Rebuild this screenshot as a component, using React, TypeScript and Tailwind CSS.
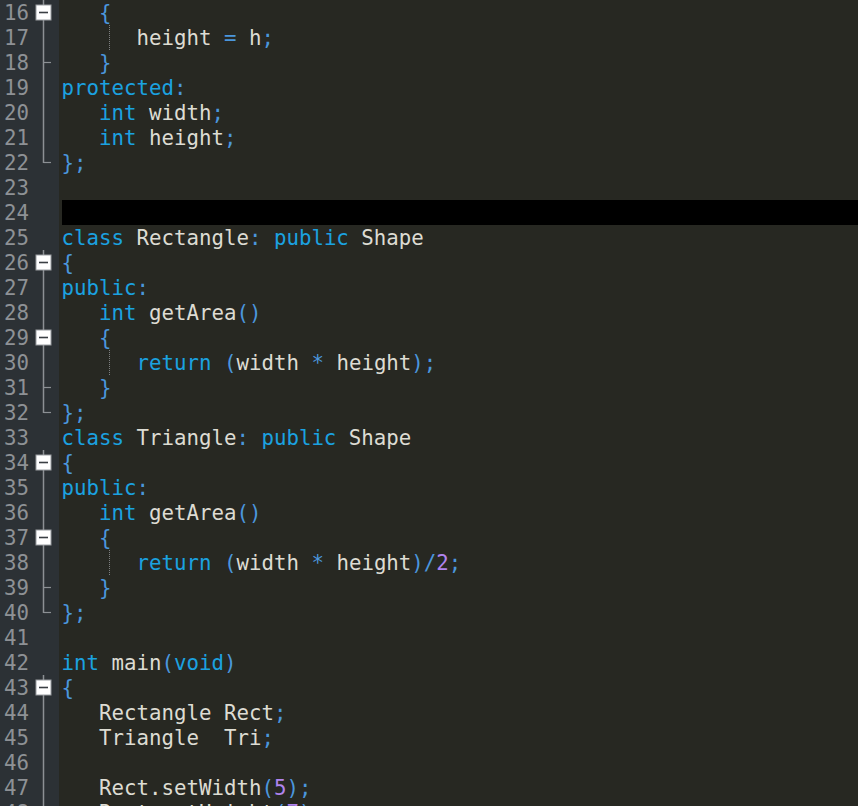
type Kind = "k" | "t" | "o" | "n";
type Tok = [string, Kind];
type Fold = "none" | "box" | "line" | "mid" | "end";

const code: { n: number; toks: Tok[]; fold: Fold; guide?: boolean; active?: boolean }[] = [
  { n: 16, fold: "box", toks: [["   ", "t"], ["{", "o"]] },
  { n: 17, fold: "line", guide: true, toks: [["      height ", "t"], ["=", "o"], [" h", "t"], [";", "o"]] },
  { n: 18, fold: "mid", toks: [["   ", "t"], ["}", "o"]] },
  { n: 19, fold: "line", toks: [["protected", "k"], [":", "o"]] },
  { n: 20, fold: "line", toks: [["   ", "t"], ["int", "k"], [" width", "t"], [";", "o"]] },
  { n: 21, fold: "line", toks: [["   ", "t"], ["int", "k"], [" height", "t"], [";", "o"]] },
  { n: 22, fold: "end", toks: [["};", "o"]] },
  { n: 23, fold: "none", toks: [] },
  { n: 24, fold: "none", toks: [], active: true },
  { n: 25, fold: "none", toks: [["class", "k"], [" Rectangle", "t"], [":", "o"], [" ", "t"], ["public", "k"], [" Shape", "t"]] },
  { n: 26, fold: "box", toks: [["{", "o"]] },
  { n: 27, fold: "line", toks: [["public", "k"], [":", "o"]] },
  { n: 28, fold: "line", toks: [["   ", "t"], ["int", "k"], [" getArea", "t"], ["()", "o"]] },
  { n: 29, fold: "box", toks: [["   ", "t"], ["{", "o"]] },
  { n: 30, fold: "line", guide: true, toks: [["      ", "t"], ["return", "k"], [" ", "t"], ["(", "o"], ["width ", "t"], ["*", "o"], [" height", "t"], [");", "o"]] },
  { n: 31, fold: "mid", toks: [["   ", "t"], ["}", "o"]] },
  { n: 32, fold: "end", toks: [["};", "o"]] },
  { n: 33, fold: "none", toks: [["class", "k"], [" Triangle", "t"], [":", "o"], [" ", "t"], ["public", "k"], [" Shape", "t"]] },
  { n: 34, fold: "box", toks: [["{", "o"]] },
  { n: 35, fold: "line", toks: [["public", "k"], [":", "o"]] },
  { n: 36, fold: "line", toks: [["   ", "t"], ["int", "k"], [" getArea", "t"], ["()", "o"]] },
  { n: 37, fold: "box", toks: [["   ", "t"], ["{", "o"]] },
  { n: 38, fold: "line", guide: true, toks: [["      ", "t"], ["return", "k"], [" ", "t"], ["(", "o"], ["width ", "t"], ["*", "o"], [" height", "t"], [")/", "o"], ["2", "n"], [";", "o"]] },
  { n: 39, fold: "mid", toks: [["   ", "t"], ["}", "o"]] },
  { n: 40, fold: "end", toks: [["};", "o"]] },
  { n: 41, fold: "none", toks: [] },
  { n: 42, fold: "none", toks: [["int", "k"], [" main", "t"], ["(", "o"], ["void", "k"], [")", "o"]] },
  { n: 43, fold: "box", toks: [["{", "o"]] },
  { n: 44, fold: "line", toks: [["   Rectangle Rect", "t"], [";", "o"]] },
  { n: 45, fold: "line", toks: [["   Triangle  Tri", "t"], [";", "o"]] },
  { n: 46, fold: "line", toks: [] },
  { n: 47, fold: "line", toks: [["   Rect.setWidth", "t"], ["(", "o"], ["5", "n"], [");", "o"]] },
  { n: 48, fold: "line", toks: [["   Rect.setHeight", "t"], ["(", "o"], ["7", "n"], [");", "o"]] },
];

const tokClass: Record<Kind, string> = {
  k: "text-[#1ba2e0]",
  t: "text-[#dddcd3]",
  o: "text-[#4b96dc]",
  n: "text-[#b084ee]",
};

function FoldMark({ fold }: { fold: Fold }) {
  const stroke = "#8c9094";
  return (
    <svg width="25" height="25" viewBox="0 0 25 25">
      {fold === "line" && <line x1="9.5" y1="0" x2="9.5" y2="25" stroke={stroke} strokeWidth="1.5" />}
      {fold === "mid" && (
        <>
          <line x1="9.5" y1="0" x2="9.5" y2="25" stroke={stroke} strokeWidth="1.5" />
          <line x1="9.5" y1="12.5" x2="17" y2="12.5" stroke={stroke} strokeWidth="1.2" />
        </>
      )}
      {fold === "end" && (
        <>
          <line x1="9.5" y1="0" x2="9.5" y2="13" stroke={stroke} strokeWidth="1.5" />
          <line x1="9.5" y1="12.5" x2="17" y2="12.5" stroke={stroke} strokeWidth="1.2" />
        </>
      )}
      {fold === "box" && (
        <>
          <line x1="9.5" y1="0" x2="9.5" y2="25" stroke={stroke} strokeWidth="1.5" />
          <rect x="2" y="5" width="15" height="15" fill="#ffffff" stroke="#9a9ea2" strokeWidth="1" />
          <line x1="5" y1="12.5" x2="14" y2="12.5" stroke="#3a3f44" strokeWidth="1.6" />
        </>
      )}
    </svg>
  );
}

export default function App() {
  return (
    <div className="w-[858px] h-[806px] overflow-hidden bg-[#272822] font-['DejaVu_Sans_Mono',monospace] text-[20.75px] leading-[25px]">
      {code.map((line, i) => (
        <div key={line.n} className="flex h-[25px]">
          <div className="w-[34px] shrink-0 bg-[#2c3135] pr-[5px] pt-[1px] text-right text-[#8e9195]">{line.n}</div>
          <div className="w-[25px] shrink-0 bg-[#2c3135]">
            <FoldMark fold={line.fold} />
          </div>
          <div className="w-[2.5px] shrink-0" />
          <div className={`relative flex-1 whitespace-pre pt-[1px] ${line.active ? "bg-black" : ""}`}>
            {line.guide && (
              <span className="absolute left-[47px] top-0 h-[25px] border-l border-dotted border-[#7d7f80]" />
            )}
            {line.toks.map((t, j) => (
              <span key={`${i}-${j}`} className={tokClass[t[1]]}>
                {t[0]}
              </span>
            ))}
          </div>
        </div>
      ))}
    </div>
  );
}
